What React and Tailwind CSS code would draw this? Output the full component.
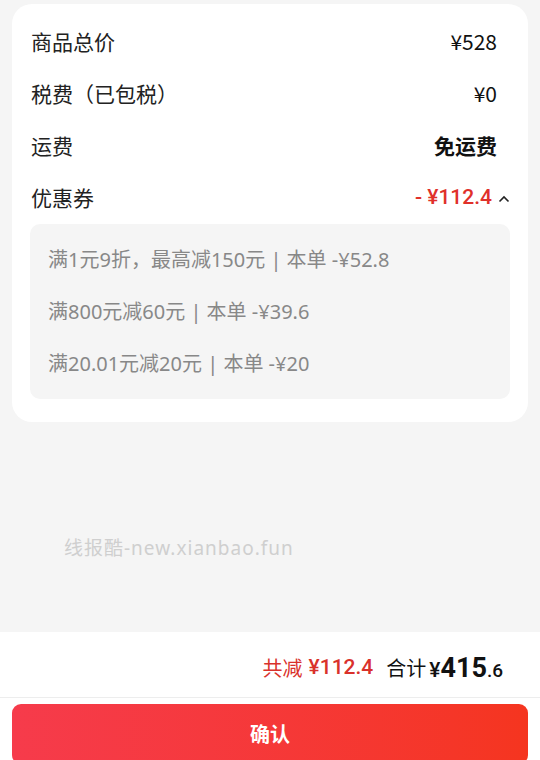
export default function App() {
  const cjk = { fontFamily: '"Noto Sans CJK SC", "Noto Sans", sans-serif' };
  const wide = { fontFamily: '"Noto Sans", "Noto Sans CJK SC", sans-serif' };
  const num = { fontFamily: 'Roboto, "Noto Sans CJK SC", sans-serif' };
  const rows = [
    { label: '商品总价', value: '¥528', cls: 'font-normal' },
    { label: '税费（已包税）', value: '¥0', cls: 'font-normal' },
    { label: '运费', value: '免运费', cls: 'font-bold' },
  ];
  const coupons = [
    '满1元9折，最高减150元 | 本单 -¥52.8',
    '满800元减60元 | 本单 -¥39.6',
    '满20.01元减20元 | 本单 -¥20',
  ];
  return (
    <div className="w-[540px] h-[760px] bg-[#f5f5f5] flex flex-col overflow-hidden" style={cjk}>
      <div className="mx-[12px] mt-[4px] bg-white rounded-[20px] pt-[12px] pb-[23px] px-[18px] shrink-0">
        {rows.map((r) => (
          <div key={r.label} className="h-[52px] flex items-center justify-between">
            <span className="text-[21px] text-[#222] pl-[1px]">{r.label}</span>
            <span className={`text-[21px] text-[#111] mr-[13px] ${r.cls}`}>{r.value}</span>
          </div>
        ))}
        <div className="h-[52px] flex items-center justify-between">
          <span className="text-[21px] text-[#222] pl-[1px]">优惠券</span>
          <span className="flex items-center">
            <span className="text-[21px] text-[#e0302a] font-medium" style={num}>- ¥112.4</span>
            <svg className="ml-[6px] mt-[2px]" width="12" height="8" viewBox="0 0 12 8" fill="none">
              <path d="M1.5 6.5 L6 2 L10.5 6.5" stroke="#222" strokeWidth="1.6" />
            </svg>
          </span>
        </div>
        <div className="bg-[#f5f5f5] rounded-[10px] pt-[10px] pb-[9px] px-[18px]" style={wide}>
          {coupons.map((c) => (
            <div key={c} className="h-[52px] flex items-center text-[20px] text-[#888]">{c}</div>
          ))}
        </div>
      </div>
      <div className="flex-1 pl-[64px] pt-[114px]">
        <div className="text-[19px] leading-[24px] tracking-[1px] text-[#cfcfcf]" style={wide}>线报酷-new.xianbao.fun</div>
      </div>
      <div className="bg-white h-[128px] shrink-0 overflow-hidden">
        <div className="h-[66px] flex items-center justify-end pr-[37px] pt-[7px] border-b border-[#ededed]">
          <span className="text-[20px] text-[#d9312b]">共减</span>
          <span className="text-[21px] text-[#d9312b] font-medium ml-[6px]" style={num}>¥112.4</span>
          <span className="text-[20px] text-[#111] ml-[13px]">合计</span>
          <span className="flex items-baseline text-[#111] ml-[3px]" style={num}>
            <span className="text-[21px] font-medium">¥</span>
            <span className="text-[27px] font-bold">415</span>
            <span className="text-[19px] font-medium">.6</span>
          </span>
        </div>
        <div className="px-[12px] pt-[6px]">
          <div className="h-[60px] rounded-[9px] bg-gradient-to-r from-[#f63b4b] to-[#f5351f] flex items-center justify-center">
            <span className="text-white text-[20px] font-bold">确认</span>
          </div>
        </div>
      </div>
    </div>
  );
}
